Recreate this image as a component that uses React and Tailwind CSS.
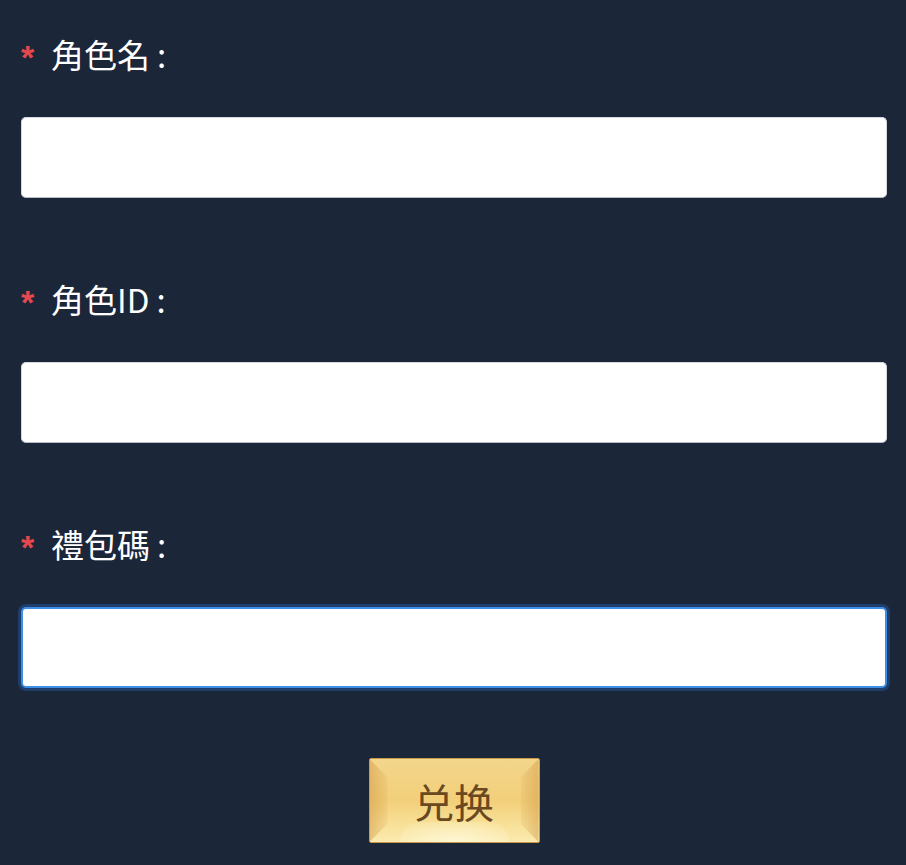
const fields = [
  { label: '角色名', focused: false },
  { label: '角色ID', focused: false },
  { label: '禮包碼', focused: true },
]

export default function App() {
  return (
    <div
      className="min-h-[865px] w-full bg-[#1b2639] pl-[21px] pr-[19px] pt-[30px]"
      style={{ fontFamily: '"Noto Sans CJK TC", "Noto Sans", sans-serif' }}
    >
      {fields.map((f, i) => (
        <div key={f.label} className={i === 0 ? '' : 'mt-[77px]'}>
          <div className="flex h-[50px] items-center text-[33px] text-white">
            <span
              className="mt-[4px] w-[30px] text-[34px] font-bold leading-none text-[#e5484d]"
              style={{ fontFamily: '"Liberation Sans", sans-serif' }}
            >
              *
            </span>
            <span>{f.label}</span>
            <span className="ml-[7px]">:</span>
          </div>
          <input
            type="text"
            className={
              'mt-[37px] block h-[81px] w-full rounded-[5px] bg-white px-4 text-[28px] outline-none ' +
              (f.focused
                ? 'border-2 border-[#3d8fe6] shadow-[0_0_0_3px_rgba(40,110,200,0.35)]'
                : 'border border-[#d5d8de] border-b-[#b9bdc5]')
            }
          />
        </div>
      ))}

      <div className="mt-[70px] flex justify-center">
        <button className="relative h-[85px] w-[171px] overflow-hidden rounded-[2px] border border-[#c99a4c] bg-[linear-gradient(180deg,#f3d68c_0%,#f2cf7a_50%,#f8e199_80%,#fbeab0_100%)] text-[40px] text-[#6a4820]">
          <span className="absolute inset-y-0 left-0 w-[18px] bg-[linear-gradient(90deg,rgba(205,145,60,0.45),rgba(205,145,60,0.1))] [clip-path:polygon(0_0,100%_22%,100%_78%,0_100%)]" />
          <span className="absolute inset-y-0 right-0 w-[18px] bg-[linear-gradient(270deg,rgba(205,145,60,0.45),rgba(205,145,60,0.1))] [clip-path:polygon(100%_0,0_22%,0_78%,100%_100%)]" />
          <span className="absolute inset-x-[30px] bottom-0 h-[20px] rounded-t-full bg-[radial-gradient(ellipse_at_bottom,rgba(255,250,220,0.8),rgba(255,250,220,0))]" />
          <span className="relative">兑换</span>
        </button>
      </div>
    </div>
  )
}
